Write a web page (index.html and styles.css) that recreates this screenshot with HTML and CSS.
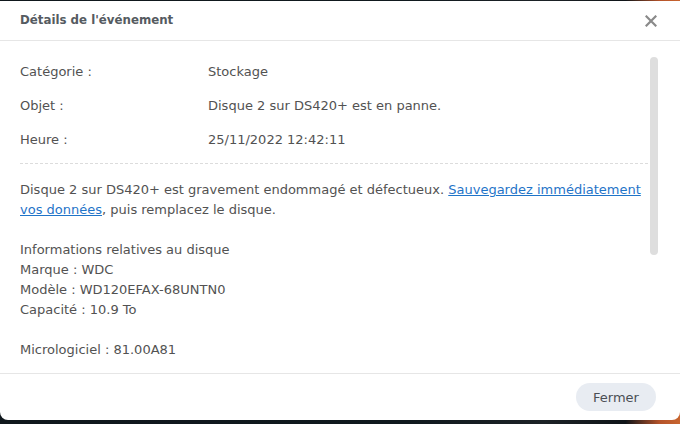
FILE: index.html
```html
<!DOCTYPE html>
<html lang="fr">
<head>
<meta charset="utf-8">
<title>Détails de l'événement</title>
<link rel="stylesheet" href="styles.css">
</head>
<body>
<div class="desktop">
  <div class="dialog">
    <div class="header">
      <div class="title">Détails de l'événement</div>
      <button class="close" aria-label="Fermer">
        <svg width="12" height="12" viewBox="0 0 12 12"><path d="M1.5 1.5 L10.5 10.5 M10.5 1.5 L1.5 10.5" stroke="#8a8a8a" stroke-width="2.2" stroke-linecap="square"/></svg>
      </button>
    </div>
    <div class="body">
      <div class="scroll">
        <div class="row"><span class="label">Catégorie :</span><span class="value">Stockage</span></div>
        <div class="row"><span class="label">Objet :</span><span class="value">Disque 2 sur DS420+ est en panne.</span></div>
        <div class="row"><span class="label">Heure :</span><span class="value">25/11/2022 12:42:11</span></div>
        <div class="sep"></div>
        <div class="desc">
          <p>Disque 2 sur DS420+ est gravement endommagé et défectueux. <a href="#">Sauvegardez immédiatement</a> <a href="#">vos données</a>, puis remplacez le disque.</p>
          <p>Informations relatives au disque<br>Marque : WDC<br>Modèle : WD120EFAX-68UNTN0<br>Capacité : 10.9 To</p>
          <p>Micrologiciel : 81.00A81</p>
        </div>
      </div>
      <div class="thumb"></div>
    </div>
    <div class="footer">
      <button class="btn">Fermer</button>
    </div>
  </div>
</div>
</body>
</html>
```
FILE: styles.css
```css
* { box-sizing: border-box; }
html, body { margin: 0; padding: 0; }
body {
  width: 680px;
  height: 424px;
  overflow: hidden;
  background: #0d1418;
  font-family: "DejaVu Sans", Verdana, sans-serif;
}
.desktop {
  height: 424px;
  padding-top: 1px;
  background: linear-gradient(90deg, #0f171c 0%, #10191e 60%, #1c2226 80%, #0f1418 92%, #b5532a 97%, #c8652f 100%);
}
.dialog {
  width: 680px;
  height: 419px;
  background: #fff;
  border-radius: 0 0 8px 8px;
  display: flex;
  flex-direction: column;
}
.header {
  height: 40px;
  flex: none;
  border-bottom: 1px solid #e6e6e6;
  display: flex;
  align-items: center;
  justify-content: space-between;
  padding: 0 21px 0 20px;
}
.title {
  font-size: 11.8px;
  font-weight: bold;
  color: #555b61;
  line-height: 16px;
  margin-top: -2px;
}
.close {
  border: 0;
  background: none;
  padding: 0;
  width: 12px;
  height: 12px;
  margin-right: 2px;
  display: flex;
}
.body {
  flex: none;
  height: 333px;
  position: relative;
  overflow: hidden;
  border-bottom: 1px solid #e6e6e6;
}
.scroll {
  padding: 13px 22px 0 20px;
  color: #525252;
  font-size: 13px;
}
.row {
  display: flex;
  height: 34px;
  align-items: center;
}
.label { width: 188px; flex: none; }
.sep {
  margin-top: 7px;
  border-top: 1px dashed #dcdcdc;
}
.desc { padding-top: 16px; }
.desc p {
  margin: 0 0 20px 0;
  line-height: 20px;
}
.desc a {
  color: #1f74c8;
  text-decoration: underline;
}
.thumb {
  position: absolute;
  left: 650px;
  top: 16px;
  width: 8px;
  height: 198px;
  border-radius: 4px;
  background: #dedede;
}
.footer {
  flex: 1;
  display: flex;
  justify-content: flex-end;
  align-items: flex-start;
  padding: 9px 24px 0 0;
}
.btn {
  width: 80px;
  height: 28px;
  border: 0;
  border-radius: 14px;
  background: #e8ecf2;
  color: #4a4f55;
  font-family: "DejaVu Sans", Verdana, sans-serif;
  font-size: 13px;
  padding: 0;
}
```
